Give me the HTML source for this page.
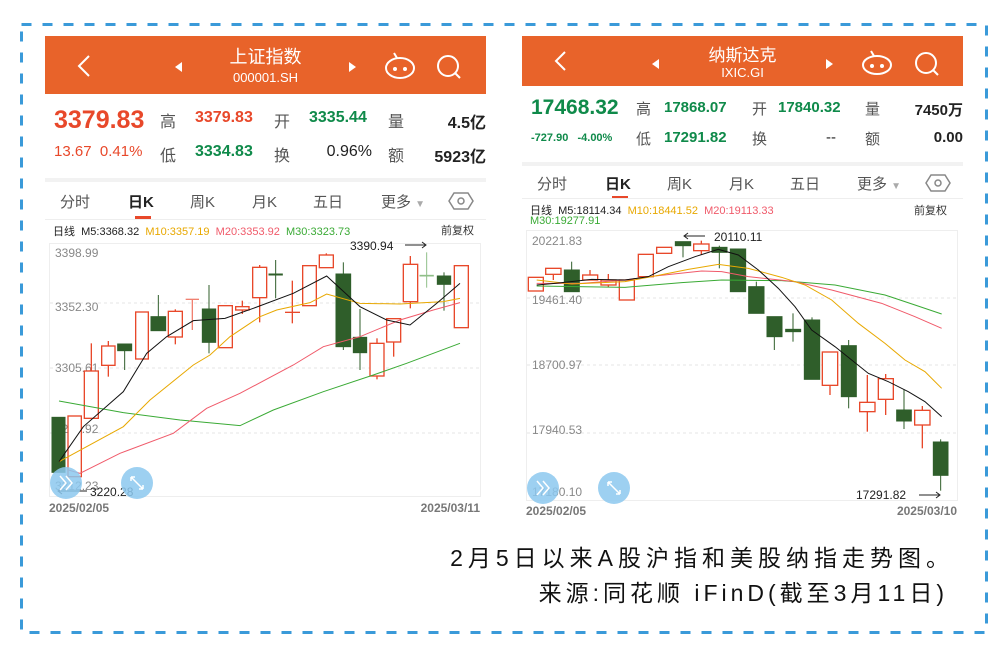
<!DOCTYPE html>
<html><head><meta charset="utf-8"><style>
*{margin:0;padding:0;box-sizing:border-box}
body{width:1002px;height:654px;background:#fff;position:relative;overflow:hidden;font-family:"Liberation Sans","Noto Sans CJK SC",sans-serif}
.a{position:absolute;white-space:nowrap}
.hd{position:absolute;background:#e8632a;color:#fff}
.r{color:#e8482a}.g{color:#0f8a4a}.k{color:#222}.gr{color:#555}
.b{font-weight:bold}
</style></head><body>
<svg class="a" style="left:0;top:0" width="1002" height="654">
<rect x="21.5" y="24.5" width="965" height="608" fill="none" stroke="#3a9ad9" stroke-width="3" stroke-dasharray="10 11"/>
</svg>

<!-- LEFT PANEL -->
<div class="hd" style="left:45px;top:36px;width:441px;height:58px"></div>
<div class="a" style="left:45px;top:43px;width:441px;text-align:center;color:#fff;font-size:18px">上证指数</div>
<div class="a" style="left:45px;top:70px;width:441px;text-align:center;color:#fff;font-size:13px">000001.SH</div>
<svg class="a" style="left:45px;top:36px" width="441" height="58" fill="none" stroke="#fff" stroke-width="2">
<path d="M44 20 L34 30 L44 40"/>
<path d="M137 26 L130 31 L137 36 Z" fill="#fff" stroke="none"/>
<path d="M304 26 L311 31 L304 36 Z" fill="#fff" stroke="none"/>
<ellipse cx="355" cy="32" rx="14" ry="10"/><path d="M352 22 L349 17"/><circle cx="350" cy="33" r="1" fill="#fff"/><circle cx="360" cy="33" r="1" fill="#fff"/>
<circle cx="403" cy="30" r="10"/><path d="M410 37 L415 42"/>
</svg>
<div class="a r b" style="left:54px;top:106px;font-size:25px">3379.83</div>
<div class="a gr" style="left:160px;top:108px;font-size:16px">高</div>
<div class="a r b" style="left:195px;top:109px;font-size:16px">3379.83</div>
<div class="a gr" style="left:274px;top:108px;font-size:16px">开</div>
<div class="a g b" style="left:309px;top:109px;font-size:16px">3335.44</div>
<div class="a gr" style="left:388px;top:108px;font-size:16px">量</div>
<div class="a k b" style="left:420px;top:109px;width:66px;text-align:right;font-size:16px">4.5亿</div>
<div class="a r" style="left:54px;top:143px;font-size:15px">13.67&nbsp; 0.41%</div>
<div class="a gr" style="left:160px;top:142px;font-size:16px">低</div>
<div class="a g b" style="left:195px;top:143px;font-size:16px">3334.83</div>
<div class="a gr" style="left:274px;top:142px;font-size:16px">换</div>
<div class="a k" style="left:300px;top:143px;width:72px;text-align:right;font-size:16px">0.96%</div>
<div class="a gr" style="left:388px;top:142px;font-size:16px">额</div>
<div class="a k b" style="left:420px;top:143px;width:66px;text-align:right;font-size:16px">5923亿</div>
<div class="a" style="left:45px;top:178px;width:441px;height:4px;background:#f2f2f2"></div>
<div class="a gr" style="left:60px;top:191px;font-size:15px">分时</div>
<div class="a k b" style="left:128px;top:191px;font-size:15px">日K</div>
<div class="a" style="left:135px;top:216px;width:16px;height:3px;background:#e8482a"></div>
<div class="a gr" style="left:190px;top:191px;font-size:15px">周K</div>
<div class="a gr" style="left:252px;top:191px;font-size:15px">月K</div>
<div class="a gr" style="left:313px;top:191px;font-size:15px">五日</div>
<div class="a gr" style="left:381px;top:191px;font-size:15px">更多 <span style="color:#aaa;font-size:10px">▼</span></div>
<svg class="a" style="left:448px;top:191px" width="26" height="20"><path d="M6 2 H20 L25 10 L20 18 H6 L1 10 Z" fill="none" stroke="#888" stroke-width="1.5"/><circle cx="13" cy="10" r="3" fill="none" stroke="#888" stroke-width="1.5"/></svg>
<div class="a" style="left:45px;top:219px;width:441px;height:1px;background:#eee"></div>
<div class="a" style="left:53px;top:223px;font-size:11px;color:#222">日线&nbsp; M5:3368.32&nbsp; <span style="color:#e8a800">M10:3357.19</span>&nbsp; <span style="color:#f05a6a">M20:3353.92</span>&nbsp; <span style="color:#3aaa35">M30:3323.73</span></div>
<div class="a" style="left:441px;top:222px;font-size:11px;color:#333">前复权</div>
<svg class="a" style="left:0;top:0" width="1002" height="654">
<rect x="49.5" y="243.5" width="431" height="253" fill="none" stroke="#eee"/>
<g stroke="#e6e6e6" stroke-dasharray="3 3"><line x1="50" x2="480" y1="303" y2="303"/><line x1="50" x2="480" y1="368" y2="368"/><line x1="50" x2="480" y1="433" y2="433"/></g>
<g font-size="12" fill="#888"><text x="55" y="257">3398.99</text><text x="55" y="311">3352.30</text><text x="55" y="372">3305.61</text><text x="55" y="433">3258.92</text><text x="55" y="490">3212.23</text></g>
<g transform="translate(40 240) scale(0.33333)" stroke-width="3">
<g fill="#2f5e2a" stroke="#2f5e2a">
<rect x="36" y="532" width="39" height="165"/>
<line x1="254" x2="254" y1="312" y2="390"/><rect x="233" y="312" width="42" height="20"/>
<line x1="355" x2="355" y1="165" y2="272"/><rect x="333" y="230" width="44" height="42"/>
<line x1="507" x2="507" y1="135" y2="340"/><rect x="487" y="207" width="40" height="100"/>
<line x1="707" x2="707" y1="60" y2="175"/><rect x="687" y="102" width="40" height="3"/>
<line x1="910" x2="910" y1="67" y2="330"/><rect x="888" y="102" width="44" height="218"/>
<line x1="960" x2="960" y1="207" y2="390"/><rect x="940" y="292" width="40" height="46"/>
<line x1="1212" x2="1212" y1="97" y2="212"/><rect x="1192" y="108" width="40" height="25"/>
</g>
<g stroke="#8fbf88" fill="#8fbf88"><line x1="1160" x2="1160" y1="37" y2="143"/><rect x="1140" y="106" width="40" height="2"/></g>
<g fill="#fff" stroke="#e8482a" stroke-width="4">
<rect x="84" y="528" width="40" height="182"/>
<line x1="154" x2="154" y1="310" y2="393"/><rect x="133" y="393" width="42" height="142"/>
<line x1="205" x2="205" y1="303" y2="410"/><rect x="185" y="318" width="40" height="58"/>
<rect x="287" y="216" width="38" height="141"/>
<line x1="406" x2="406" y1="208" y2="313"/><rect x="385" y="214" width="42" height="77"/>
<line x1="457" x2="457" y1="177" y2="270" stroke="#f08070"/><line x1="437" x2="477" y1="178" y2="178" stroke="#f08070"/>
<rect x="535" y="197" width="42" height="126"/>
<line x1="607" x2="607" y1="182" y2="222"/><rect x="587" y="200" width="40" height="10"/>
<line x1="659" x2="659" y1="75" y2="247"/><rect x="638" y="82" width="42" height="91"/>
<line x1="757" x2="757" y1="122" y2="250"/><line x1="735" x2="780" y1="217" y2="217"/>
<rect x="788" y="77" width="41" height="120"/>
<line x1="859" x2="859" y1="40" y2="83"/><rect x="838" y="45" width="42" height="38"/>
<line x1="1011" x2="1011" y1="295" y2="418"/><rect x="990" y="310" width="42" height="98"/>
<line x1="1061" x2="1061" y1="306" y2="350"/><rect x="1040" y="236" width="42" height="70"/>
<line x1="1111" x2="1111" y1="48" y2="205"/><rect x="1090" y="73" width="43" height="112"/>
<rect x="1243" y="77" width="42" height="186"/>
</g>
<g fill="none" stroke-width="3">
<polyline stroke="#3aaa35" points="57,483 250,518 420,540 600,557 700,510 850,455 1000,405 1100,370 1260,310"/>
<polyline stroke="#f05a6a" points="85,690 120,700 240,640 400,580 500,505 600,460 760,375 850,320 960,290 1080,240 1180,210 1260,188"/>
<polyline stroke="#e8a800" points="57,665 250,560 330,480 460,375 510,345 570,290 660,230 710,210 810,188 860,162 960,190 1080,192 1210,185 1260,175"/>
<polyline stroke="#111" points="57,665 130,560 250,455 320,340 380,290 460,242 555,235 640,205 760,160 860,108 960,200 1040,240 1110,255 1190,190 1260,130"/>
</g>
</g>
<text x="350" y="250" font-size="12" fill="#222">3390.94</text><path d="M405 245 H426 M422 242 L426 245 L422 248" stroke="#222" fill="none"/>
<text x="90" y="496" font-size="12" fill="#222">3220.28</text><path d="M87 491 H58 M62 488 L58 491 L62 494" stroke="#222" fill="none"/>
<circle cx="66" cy="483" r="16" fill="#8cc8ee" opacity="0.85"/><path d="M60 476 L66 483 L60 490 M66 476 L72 483 L66 490" stroke="#fff" fill="none" stroke-width="1.5"/>
<circle cx="137" cy="483" r="16" fill="#8cc8ee" opacity="0.85"/><path d="M131 477 L143 489 M131 477 h4 M131 477 v4 M143 489 h-4 M143 489 v-4" stroke="#fff" fill="none" stroke-width="1.5"/>
<text x="49" y="512" font-size="12" fill="#777" font-weight="bold">2025/02/05</text><text x="480" y="512" font-size="12" fill="#777" text-anchor="end" font-weight="bold">2025/03/11</text>
</svg>

<!-- RIGHT PANEL -->
<div class="hd" style="left:522px;top:36px;width:441px;height:50px"></div>
<div class="a" style="left:522px;top:41px;width:441px;text-align:center;color:#fff;font-size:17px">纳斯达克</div>
<div class="a" style="left:522px;top:65px;width:441px;text-align:center;color:#fff;font-size:13px">IXIC.GI</div>
<svg class="a" style="left:522px;top:36px" width="441" height="50" fill="none" stroke="#fff" stroke-width="2">
<path d="M43 16 L34 25 L43 34"/>
<path d="M137 23 L130 28 L137 33 Z" fill="#fff" stroke="none"/>
<path d="M304 23 L311 28 L304 33 Z" fill="#fff" stroke="none"/>
<ellipse cx="355" cy="29" rx="14" ry="9"/><path d="M352 20 L349 15"/><circle cx="350" cy="30" r="1" fill="#fff"/><circle cx="360" cy="30" r="1" fill="#fff"/>
<circle cx="404" cy="27" r="10"/><path d="M411 34 L416 39"/>
</svg>
<div class="a g b" style="left:531px;top:96px;font-size:21px">17468.32</div>
<div class="a gr" style="left:636px;top:98px;font-size:15px">高</div>
<div class="a g b" style="left:664px;top:99px;font-size:15px">17868.07</div>
<div class="a gr" style="left:752px;top:98px;font-size:15px">开</div>
<div class="a g b" style="left:778px;top:99px;font-size:15px">17840.32</div>
<div class="a gr" style="left:865px;top:98px;font-size:15px">量</div>
<div class="a k b" style="left:900px;top:99px;width:63px;text-align:right;font-size:15px">7450万</div>
<div class="a g b" style="left:531px;top:132px;font-size:11px">-727.90&nbsp;&nbsp; -4.00%</div>
<div class="a gr" style="left:636px;top:128px;font-size:15px">低</div>
<div class="a g b" style="left:664px;top:129px;font-size:15px">17291.82</div>
<div class="a gr" style="left:752px;top:128px;font-size:15px">换</div>
<div class="a k" style="left:826px;top:129px;font-size:15px">-- </div>
<div class="a gr" style="left:865px;top:128px;font-size:15px">额</div>
<div class="a k b" style="left:900px;top:129px;width:63px;text-align:right;font-size:15px">0.00</div>
<div class="a" style="left:522px;top:162px;width:441px;height:4px;background:#f2f2f2"></div>
<div class="a gr" style="left:537px;top:173px;font-size:15px">分时</div>
<div class="a k b" style="left:605px;top:173px;font-size:15px">日K</div>
<div class="a" style="left:612px;top:196px;width:16px;height:3px;background:#e8482a"></div>
<div class="a gr" style="left:667px;top:173px;font-size:15px">周K</div>
<div class="a gr" style="left:729px;top:173px;font-size:15px">月K</div>
<div class="a gr" style="left:790px;top:173px;font-size:15px">五日</div>
<div class="a gr" style="left:857px;top:173px;font-size:15px">更多 <span style="color:#aaa;font-size:10px">▼</span></div>
<svg class="a" style="left:925px;top:173px" width="26" height="20"><path d="M6 2 H20 L25 10 L20 18 H6 L1 10 Z" fill="none" stroke="#888" stroke-width="1.5"/><circle cx="13" cy="10" r="3" fill="none" stroke="#888" stroke-width="1.5"/></svg>
<div class="a" style="left:522px;top:198px;width:441px;height:1px;background:#eee"></div>
<div class="a" style="left:530px;top:202px;font-size:11px;color:#222">日线&nbsp; M5:18114.34&nbsp; <span style="color:#e8a800">M10:18441.52</span>&nbsp; <span style="color:#f05a6a">M20:19113.33</span></div>
<div class="a" style="left:530px;top:215px;font-size:11px;color:#3aaa35">M30:19277.91</div>
<div class="a" style="left:914px;top:202px;font-size:11px;color:#333">前复权</div>
<svg class="a" style="left:0;top:0" width="1002" height="654">
<rect x="526.5" y="230.5" width="431" height="270" fill="none" stroke="#eee"/>
<g stroke="#e6e6e6" stroke-dasharray="3 3"><line x1="527" x2="957" y1="298" y2="298"/><line x1="527" x2="957" y1="365" y2="365"/><line x1="527" x2="957" y1="433" y2="433"/></g>
<g font-size="12" fill="#888"><text x="532" y="245">20221.83</text><text x="532" y="304">19461.40</text><text x="532" y="369">18700.97</text><text x="532" y="434">17940.53</text><text x="532" y="496">17180.10</text></g>
<g transform="translate(515 200) scale(0.33333)" stroke-width="3">
<g fill="#2f5e2a" stroke="#2f5e2a">
<line x1="170" x2="170" y1="185" y2="275"/><rect x="148" y="210" width="45" height="65"/>
<line x1="504" x2="504" y1="125" y2="172"/><rect x="481" y="125" width="46" height="12"/>
<line x1="613" x2="613" y1="137" y2="205"/><rect x="591" y="142" width="45" height="15"/>
<rect x="646" y="147" width="46" height="128"/>
<line x1="724" x2="724" y1="245" y2="340"/><rect x="701" y="260" width="46" height="80"/>
<line x1="778" x2="778" y1="350" y2="450"/><rect x="756" y="350" width="45" height="60"/>
<line x1="834" x2="834" y1="340" y2="425"/><rect x="812" y="388" width="45" height="7"/>
<line x1="891" x2="891" y1="352" y2="538"/><rect x="868" y="360" width="46" height="178"/>
<line x1="1001" x2="1001" y1="420" y2="625"/><rect x="979" y="437" width="45" height="153"/>
<line x1="1167" x2="1167" y1="568" y2="687"/><rect x="1145" y="630" width="44" height="33"/>
<line x1="1277" x2="1277" y1="718" y2="872"/><rect x="1255" y="726" width="44" height="100"/>
</g>
<g fill="#fff" stroke="#e8482a" stroke-width="4">
<rect x="40" y="232" width="45" height="41"/>
<line x1="115" x2="115" y1="205" y2="240"/><rect x="92" y="205" width="46" height="18"/>
<line x1="225" x2="225" y1="210" y2="240"/><rect x="203" y="225" width="45" height="15"/>
<line x1="280" x2="280" y1="222" y2="262"/><rect x="258" y="240" width="45" height="15"/>
<rect x="313" y="240" width="45" height="60"/>
<rect x="370" y="163" width="45" height="67"/>
<rect x="425" y="142" width="45" height="18"/>
<line x1="559" x2="559" y1="122" y2="165"/><rect x="536" y="132" width="46" height="20"/>
<line x1="945" x2="945" y1="456" y2="585"/><rect x="922" y="456" width="46" height="100"/>
<line x1="1057" x2="1057" y1="525" y2="695"/><rect x="1034" y="607" width="46" height="28"/>
<line x1="1112" x2="1112" y1="522" y2="645"/><rect x="1090" y="536" width="45" height="62"/>
<line x1="1222" x2="1222" y1="618" y2="745"/><rect x="1199" y="631" width="46" height="44"/>
</g>
<g fill="none" stroke-width="3">
<polyline stroke="#3aaa35" points="65,258 330,262 500,248 620,240 800,242 960,255 1110,285 1200,315 1280,342"/>
<polyline stroke="#f05a6a" points="65,250 200,250 330,240 420,228 560,213 620,215 700,230 840,245 950,270 1100,310 1200,350 1280,385"/>
<polyline stroke="#e8a800" points="65,240 170,252 330,245 420,228 520,208 610,193 700,205 800,232 870,255 950,300 1030,370 1110,430 1170,480 1230,515 1280,565"/>
<polyline stroke="#111" points="65,255 120,250 230,238 330,240 400,230 460,200 540,170 610,148 670,165 730,210 790,265 840,320 890,390 960,440 1010,480 1060,520 1120,545 1180,575 1230,605 1280,650"/>
</g>
</g>
<text x="714" y="241" font-size="12" fill="#222">20110.11</text><path d="M705 236 H684 M688 233 L684 236 L688 239" stroke="#222" fill="none"/>
<text x="856" y="499" font-size="12" fill="#222">17291.82</text><path d="M919 495 H940 M936 492 L940 495 L936 498" stroke="#222" fill="none"/>
<circle cx="543" cy="488" r="16" fill="#8cc8ee" opacity="0.85"/><path d="M537 481 L543 488 L537 495 M543 481 L549 488 L543 495" stroke="#fff" fill="none" stroke-width="1.5"/>
<circle cx="614" cy="488" r="16" fill="#8cc8ee" opacity="0.85"/><path d="M608 482 L620 494 M608 482 h4 M608 482 v4 M620 494 h-4 M620 494 v-4" stroke="#fff" fill="none" stroke-width="1.5"/>
<text x="526" y="515" font-size="12" fill="#777" font-weight="bold">2025/02/05</text><text x="957" y="515" font-size="12" fill="#777" text-anchor="end" font-weight="bold">2025/03/10</text>
</svg>

<div class="a" style="right:48px;top:539px;font-size:23px;color:#111;letter-spacing:5px">2月5日以来A股沪指和美股纳指走势图。</div>
<div class="a" style="right:54px;top:574px;font-size:23px;color:#111;letter-spacing:4px">来源:同花顺 iFinD(截至3月11日)</div>
</body></html>
